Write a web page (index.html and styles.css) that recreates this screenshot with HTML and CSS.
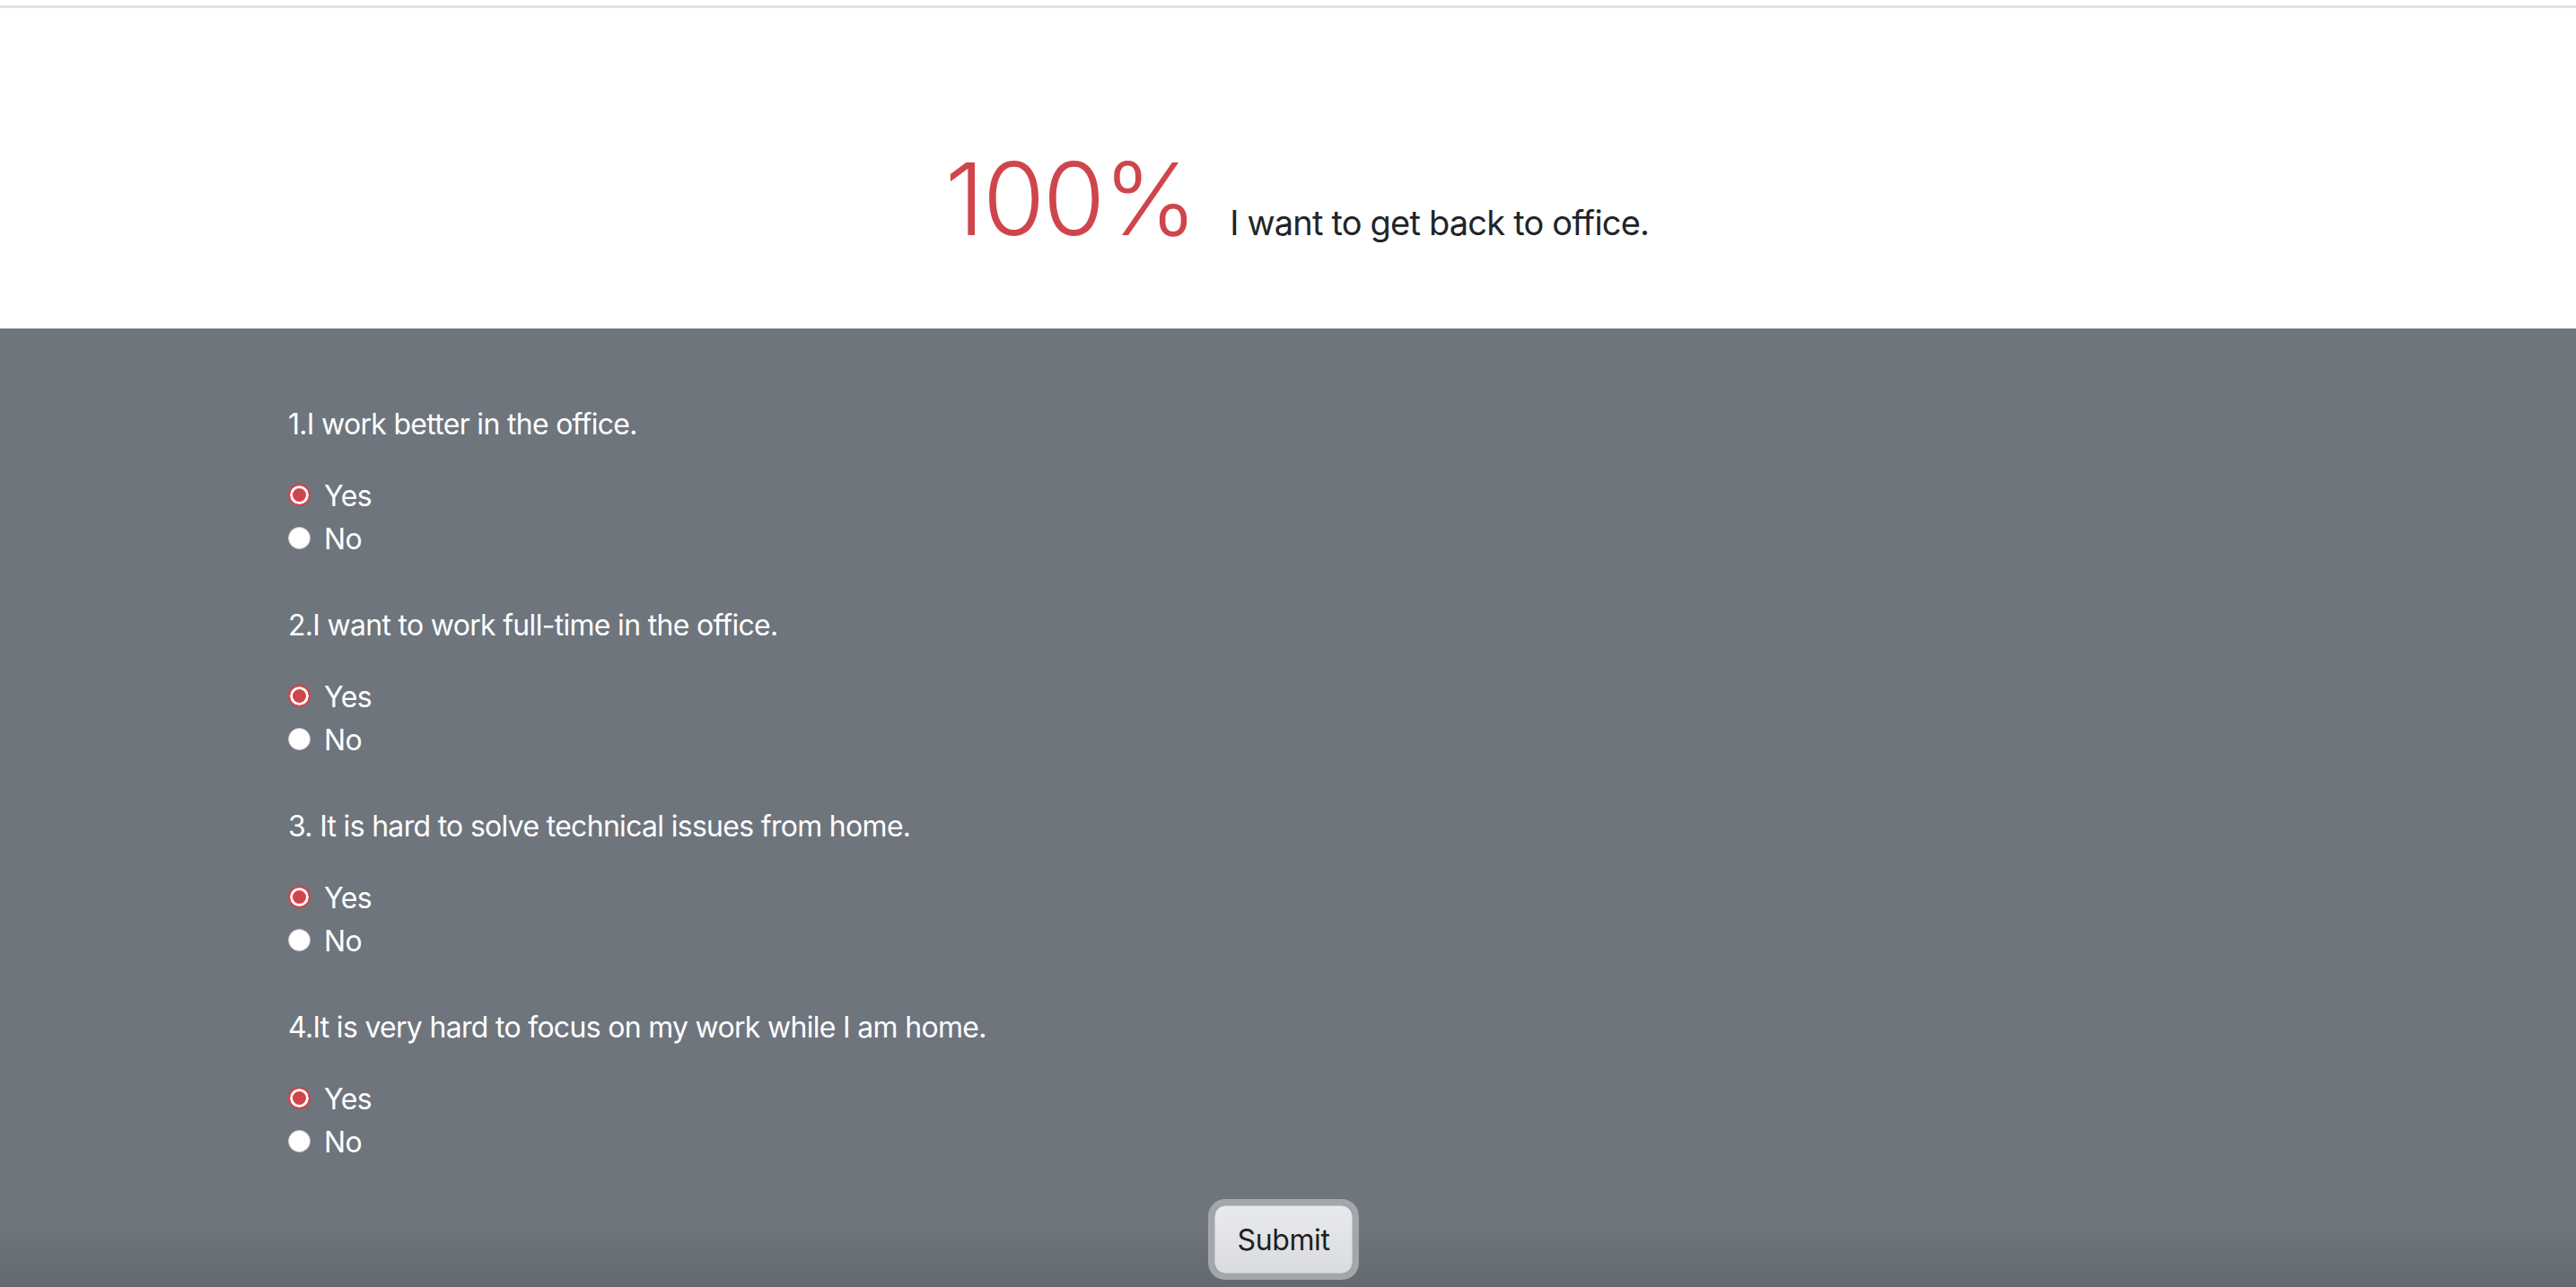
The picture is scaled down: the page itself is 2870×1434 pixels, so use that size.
FILE: index.html
```html
<!DOCTYPE html>
<html lang="en">
<head>
<meta charset="utf-8">
<title>Survey</title>
<link rel="stylesheet" href="styles.css">
</head>
<body>
<div class="topline"></div>
<header class="hero">
  <span class="percent">100%</span>
  <span class="verdict">I want to get back to office.</span>
</header>
<main class="survey">
  <form class="form">
    <div class="questions">
      <div class="question">
        <p class="qtext">1.I work better in the office.</p>
        <label class="opt"><input type="radio" name="q1" checked><span>Yes</span></label>
        <label class="opt"><input type="radio" name="q1"><span>No</span></label>
      </div>
      <div class="question">
        <p class="qtext">2.I want to work full-time in the office.</p>
        <label class="opt"><input type="radio" name="q2" checked><span>Yes</span></label>
        <label class="opt"><input type="radio" name="q2"><span>No</span></label>
      </div>
      <div class="question">
        <p class="qtext">3. It is hard to solve technical issues from home.</p>
        <label class="opt"><input type="radio" name="q3" checked><span>Yes</span></label>
        <label class="opt"><input type="radio" name="q3"><span>No</span></label>
      </div>
      <div class="question">
        <p class="qtext">4.It is very hard to focus on my work while I am home.</p>
        <label class="opt"><input type="radio" name="q4" checked><span>Yes</span></label>
        <label class="opt"><input type="radio" name="q4"><span>No</span></label>
      </div>
    </div>
    <div class="actions">
      <button type="button" class="submit">Submit</button>
    </div>
  </form>
</main>
</body>
</html>
```
FILE: styles.css
```css
html, body {
  margin: 0;
  padding: 0;
}
body {
  background: #ffffff;
  font-family: Inter, "Noto Sans", "Liberation Sans", sans-serif;
  color: #212529;
  height: 1434px;
  overflow: hidden;
}
.topline {
  margin-top: 6px;
  height: 3px;
  background: #e1e1e1;
}
.hero {
  height: 357px;
  box-sizing: border-box;
  display: flex;
  justify-content: center;
  align-items: baseline;
  gap: 38px;
  padding-top: 145px;
  padding-left: 20px;
}
.percent {
  font-size: 112px;
  font-weight: 300;
  color: #cf454c;
  line-height: 1.2;
  letter-spacing: -2px;
}
.verdict {
  font-size: 38px;
  font-weight: 400;
  color: #212529;
  line-height: 1.2;
  letter-spacing: -0.8px;
}
.survey {
  height: 1068px;
  box-sizing: border-box;
  background: linear-gradient(to bottom, #6e757d 0, #6e757d calc(100% - 70px), #63696f 100%);
  padding-top: 83px;
  color: #ffffff;
}
.form {
  display: flex;
  flex-direction: column;
}
.questions {
  display: flex;
  flex-direction: column;
  gap: 48px;
  padding-left: 321px;
  margin-bottom: 46px;
}
.question {
  display: flex;
  flex-direction: column;
}
.qtext {
  margin: 0 0 32px 0;
  font-size: 32px;
  line-height: 48px;
  letter-spacing: -0.7px;
}
.opt {
  display: flex;
  align-items: center;
  gap: 15px;
  font-size: 32px;
  line-height: 48px;
  letter-spacing: -0.6px;
}
.opt input {
  appearance: none;
  -webkit-appearance: none;
  margin: 0;
  width: 25px;
  height: 25px;
  border-radius: 50%;
  background: #ffffff;
  border: 1px solid #c8c8c8;
  box-sizing: border-box;
  position: relative;
  top: -2px;
}
.opt input:checked {
  background: #cf454c;
  border: 2px solid #cf454c;
  box-shadow: inset 0 0 0 3px #ffffff;
}
.actions {
  display: flex;
  justify-content: center;
  padding-right: 10px;
}
.submit {
  font-family: Inter, "Noto Sans", "Liberation Sans", sans-serif;
  font-size: 32px;
  letter-spacing: -0.4px;
  color: #1d1f21;
  width: 154px;
  height: 76px;
  border: 1px solid #c4c6ca;
  border-radius: 12px;
  background: linear-gradient(to bottom, #e9eaed, #d9dbde);
  box-shadow: 0 0 0 7px #a3a6ab;
  padding: 0;
  cursor: pointer;
}
```
